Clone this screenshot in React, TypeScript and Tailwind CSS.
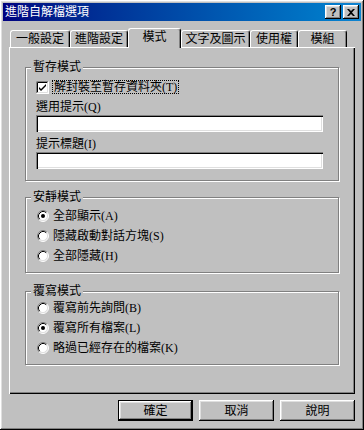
const raised =
  'shadow-[inset_-1px_-1px_#000,inset_1px_1px_#fff,inset_-2px_-2px_#808080,inset_2px_2px_#dfdfdf]';

const tabs = [
  { label: '一般設定', w: 'w-[60px]' },
  { label: '進階設定', w: 'w-[58px]' },
  { label: '模式', w: 'w-[53px]', active: true },
  { label: '文字及圖示', w: 'w-[69px]' },
  { label: '使用權', w: 'w-[48px]' },
  { label: '模組', w: 'w-[49px]' },
];

function Radio({ checked }: { checked?: boolean }) {
  return (
    <svg width="12" height="12" viewBox="0 0 12 12" className="shrink-0">
      <circle cx="6" cy="6" r="5" fill="#fff" />
      <path d="M2.11 9.89A5.5 5.5 0 0 1 9.89 2.11" fill="none" stroke="#808080" />
      <path d="M9.89 2.11A5.5 5.5 0 0 1 2.11 9.89" fill="none" stroke="#fff" />
      <path d="M2.82 9.18A4.5 4.5 0 0 1 9.18 2.82" fill="none" stroke="#000" />
      <path d="M9.18 2.82A4.5 4.5 0 0 1 2.82 9.18" fill="none" stroke="#dfdfdf" />
      {checked && <circle cx="6" cy="6" r="2" fill="#000" />}
    </svg>
  );
}

function Checkbox() {
  return (
    <svg width="13" height="13" viewBox="0 0 13 13" className="shrink-0">
      <rect x="0" y="0" width="13" height="13" fill="#fff" />
      <path d="M0.5 12.5V0.5H12.5" fill="none" stroke="#808080" />
      <path d="M1.5 11.5V1.5H11.5" fill="none" stroke="#000" />
      <path d="M0.5 12.5H12.5V0.5" fill="none" stroke="#fff" />
      <path d="M1.5 11.5H11.5V1.5" fill="none" stroke="#dfdfdf" />
      <path d="M3 6l2 2 5-5v2l-5 5-2-2z" fill="#000" />
    </svg>
  );
}

function Group({
  title,
  className,
  children,
}: {
  title: string;
  className: string;
  children: React.ReactNode;
}) {
  return (
    <fieldset
      className={`border border-[#808080] shadow-[1px_1px_0_#fff,inset_1px_1px_0_#fff] ${className}`}
    >
      <legend className="ml-[5px] px-[2px] bg-[#c0c0c0] leading-[14px]">{title}</legend>
      {children}
    </fieldset>
  );
}

function RadioRow({ label, checked }: { label: string; checked?: boolean }) {
  return (
    <div className="flex items-center h-[20px] pl-[11px] gap-[4px] leading-[14px]">
      <Radio checked={checked} />
      <span>{label}</span>
    </div>
  );
}

const field =
  'w-[287px] h-[17px] bg-white shadow-[inset_1px_1px_#808080,inset_2px_2px_#000,inset_-1px_-1px_#fff,inset_-2px_-2px_#dfdfdf]';

export default function App() {
  return (
    <div
      className={`w-[364px] h-[430px] bg-[#c0c0c0] p-[3px] flex flex-col text-[12px] text-black font-['Liberation_Serif','Noto_Sans_CJK_TC',serif] ${raised}`}
    >
      {/* Title bar */}
      <div className="h-[18px] flex items-center bg-linear-to-r from-[#000080] to-[#1084d0] pl-[2px] pr-[2px]">
        <span className="flex-1 text-white leading-[14px]">進階自解檔選項</span>
        <div
          className={`w-[16px] h-[14px] flex items-center justify-center bg-[#c0c0c0] text-[11px] font-bold font-['Liberation_Sans',sans-serif] leading-none ${raised}`}
        >
          ?
        </div>
        <div
          className={`ml-[2px] w-[16px] h-[14px] flex items-center justify-center bg-[#c0c0c0] ${raised}`}
        >
          <svg width="8" height="7" viewBox="0 0 8 7">
            <path d="M0 0h2l2 2 2-2h2L5 3.5 8 7H6L4 5 2 7H0l3-3.5z" fill="#000" />
          </svg>
        </div>
      </div>

      <div className="flex flex-col px-[6px]">
        {/* Tabs */}
        <div className="flex items-end mt-[7px] pl-[1px]">
          {tabs.map((t) =>
            t.active ? (
              <div
                key={t.label}
                className={`${t.w} relative z-10 h-[20px] -mb-[1px] pb-[4px] flex items-center justify-center bg-[#c0c0c0] border-t border-l border-r border-t-white border-l-white border-r-black rounded-t-[3px] shadow-[inset_-1px_0_#808080] leading-[14px]`}
              >
                {t.label}
              </div>
            ) : (
              <div
                key={t.label}
                className={`${t.w} h-[17px] flex items-center justify-center border-t border-l border-r border-t-white border-l-white border-r-black rounded-t-[3px] shadow-[inset_-1px_0_#808080] leading-[14px]`}
              >
                {t.label}
              </div>
            )
          )}
        </div>

        {/* Panel */}
        <div className="h-[347px] pt-[13px] px-[16px] flex flex-col shadow-[inset_1px_1px_#fff,inset_-1px_-1px_#000,inset_-2px_-2px_#808080]">
          <Group title="暫存模式" className="pb-[11px]">
            <div className="flex flex-col pl-[10px] leading-[14px]">
              <div className="flex items-center mt-[6px] h-[14px]">
                <Checkbox />
                <span className="ml-[3px] border border-dotted border-black px-[1px] leading-[12px]">
                  解封裝至暫存資料夾(T)
                </span>
              </div>
              <div className="mt-[6px]">選用提示(Q)</div>
              <div className={`mt-[1px] ${field}`} />
              <div className="mt-[5px]">提示標題(I)</div>
              <div className={`mt-[1px] ${field}`} />
            </div>
          </Group>

          <Group title="安靜模式" className="mt-[9px] pt-[2px] pb-[6px]">
            <RadioRow label="全部顯示(A)" checked />
            <RadioRow label="隱藏啟動對話方塊(S)" />
            <RadioRow label="全部隱藏(H)" />
          </Group>

          <Group title="覆寫模式" className="mt-[11px] pb-[6px]">
            <RadioRow label="覆寫前先詢問(B)" />
            <RadioRow label="覆寫所有檔案(L)" checked />
            <RadioRow label="略過已經存在的檔案(K)" />
          </Group>
        </div>

        {/* Buttons */}
        <div className="flex justify-end gap-[6px] mt-[6px]">
          <button
            className={`w-[75px] h-[21px] border border-black flex items-center justify-center leading-[14px] ${raised}`}
          >
            確定
          </button>
          <button
            className={`w-[75px] h-[21px] flex items-center justify-center leading-[14px] ${raised}`}
          >
            取消
          </button>
          <button
            className={`w-[75px] h-[21px] flex items-center justify-center leading-[14px] ${raised}`}
          >
            說明
          </button>
        </div>
      </div>
    </div>
  );
}
